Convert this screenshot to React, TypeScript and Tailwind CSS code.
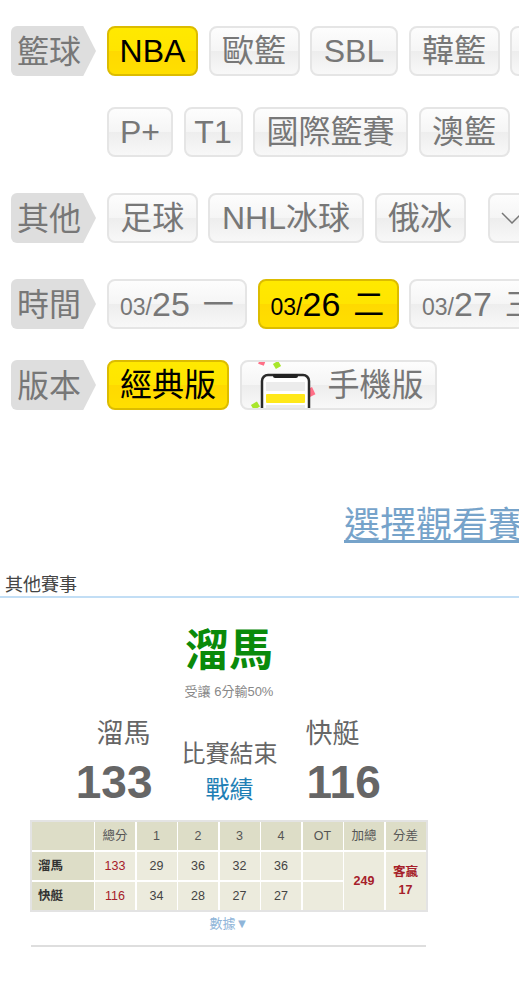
import React, { FC, ReactNode } from "react";

const greyBtn =
  "border-2 border-[#e5e5e5] text-[#777] bg-[linear-gradient(180deg,#fdfdfd_0%,#f5f5f5_50%,#ededed_50%,#f8f8f8_100%)]";
const yellowBtn =
  "border-2 border-[#dcbc00] text-black bg-[linear-gradient(180deg,#ffe900_0%,#ffe500_50%,#ffd900_50%,#ffdf00_100%)]";

const Tab: FC<{ width: string; active?: boolean; children: ReactNode }> = ({ width, active, children }) => (
  <div
    className={`h-[50px] shrink-0 rounded-[8px] flex items-center justify-center text-[32px] leading-none whitespace-nowrap ${width} ${
      active ? yellowBtn : greyBtn
    }`}
  >
    {children}
  </div>
);

const Row: FC<{ label?: string; className?: string; children: ReactNode }> = ({ label, className, children }) => (
  <div className={`flex items-center ml-[11px] ${className}`}>
    {label ? (
      <div className="w-[85px] h-[50px] shrink-0 flex items-center pl-[6px] pt-[1px] text-[32px] leading-none text-[#777] bg-[#dedede] rounded-l-[6px] [clip-path:polygon(0_0,85%_0,100%_50%,85%_100%,0_100%)]">
        {label}
      </div>
    ) : (
      <div className="w-[85px] h-[50px] shrink-0" />
    )}
    <div className="flex gap-[10.5px] ml-[11px]">{children}</div>
  </div>
);

const DateTab: FC<{ width: string; day: string; week: string; active?: boolean }> = ({ width, day, week, active }) => (
  <Tab width={width} active={active}>
    <div className="flex items-center w-full pl-[11px]">
      <span className="text-[23px] mt-[6px]">03/</span>
      <span className="text-[34px]">{day}</span>
      <span className="text-[31px] ml-[13px]">{week}</span>
    </div>
  </Tab>
);

const PhoneIcon = () => (
  <svg className="absolute left-0 top-0" width="78" height="46" viewBox="0 0 78 46" fill="none">
    <rect x="17" y="-2" width="6" height="5" fill="#ff6f87" transform="rotate(20 20 0)" />
    <rect x="32" y="0" width="6" height="6" fill="#a8e62c" transform="rotate(-30 35 3)" />
    <rect x="66" y="26" width="6" height="8" fill="#ff6f87" transform="rotate(-25 69 30)" />
    <rect x="10" y="41" width="7" height="6" fill="#a8e62c" transform="rotate(-30 13 44)" />
    <rect x="20" y="13" width="47" height="46" rx="6" fill="#fff" stroke="#2b2b2b" strokeWidth="2.5" />
    <rect x="31" y="12" width="25" height="4" rx="2" fill="#222" />
    <rect x="24" y="20" width="39" height="9" fill="#ececec" />
    <rect x="24" y="32" width="39" height="9" rx="1" fill="#ffe81a" />
    <rect x="24" y="43" width="39" height="5" fill="#ececec" />
  </svg>
);

const Cell: FC<{ className?: string; children?: ReactNode }> = ({ className, children }) => (
  <div className={`flex flex-col items-center justify-center text-[12.5px] leading-[18px] ${className}`}>{children}</div>
);

const head = "bg-[#ddddc7] text-[#555]";
const body = "bg-[#ecebdd] text-[#444]";
const red = "text-[#a6202a] font-medium";
const strong = "text-[#a6202a] font-bold";

const ScoreTable = () => (
  <div className="ml-[30px] w-[398px] grid grid-cols-[61.5px_repeat(8,40px)] grid-rows-[repeat(3,28.3px)] gap-[1.5px] bg-white border-2 border-[#e3e3e3]">
    <Cell className={head} />
    {["總分", "1", "2", "3", "4", "OT", "加總", "分差"].map((t) => (
      <Cell key={t} className={head}>
        {t}
      </Cell>
    ))}
    <Cell className={`${head} !items-start pl-[6px] !text-[#333] font-bold`}>溜馬</Cell>
    <Cell className={`${body} ${red}`}>133</Cell>
    {["29", "36", "32", "36"].map((t, i) => (
      <Cell key={i} className={body}>
        {t}
      </Cell>
    ))}
    <Cell className={body} />
    <Cell className={`${body} row-span-2 ${strong}`}>249</Cell>
    <Cell className={`${body} row-span-2 ${strong}`}>
      <span>客贏</span>
      <span>17</span>
    </Cell>
    <Cell className={`${head} !items-start pl-[6px] !text-[#333] font-bold`}>快艇</Cell>
    <Cell className={`${body} ${red}`}>116</Cell>
    {["34", "28", "27", "27"].map((t, i) => (
      <Cell key={i} className={body}>
        {t}
      </Cell>
    ))}
    <Cell className={body} />
  </div>
);

export default function App() {
  return (
    <div className="w-[519px] h-[1000px] overflow-hidden bg-white pt-[26px] font-['Liberation_Sans','Noto_Sans_CJK_TC',sans-serif]">
      <Row label="籃球">
        <Tab width="w-[91px]" active>NBA</Tab>
        <Tab width="w-[91px]">歐籃</Tab>
        <Tab width="w-[88px]">SBL</Tab>
        <Tab width="w-[91px]">韓籃</Tab>
        <Tab width="w-[91px]">日籃</Tab>
      </Row>
      <Row className="mt-[31px]">
        <Tab width="w-[66px]">P+</Tab>
        <Tab width="w-[59px]">T1</Tab>
        <Tab width="w-[155px]">國際籃賽</Tab>
        <Tab width="w-[91px]">澳籃</Tab>
      </Row>
      <Row label="其他" className="mt-[36px]">
        <Tab width="w-[90.5px]">足球</Tab>
        <Tab width="w-[156px]">NHL冰球</Tab>
        <Tab width="w-[91px]">俄冰</Tab>
        <Tab width="w-[60px] ml-[12px] !justify-start pl-[11px]">
          <svg width="22" height="12" viewBox="0 0 22 12" fill="none" stroke="#777" strokeWidth="1.5">
            <path d="M1 1 L11 11 L21 1" />
          </svg>
        </Tab>
      </Row>
      <Row label="時間" className="mt-[36px]">
        <DateTab width="w-[140px]" day="25" week="一" />
        <DateTab width="w-[141px]" day="26" week="二" active />
        <DateTab width="w-[140px]" day="27" week="三" />
      </Row>
      <Row label="版本" className="mt-[31px]">
        <Tab width="w-[122px]" active>經典版</Tab>
        <Tab width="w-[197px] relative overflow-hidden !justify-end pr-[11px]">
          <PhoneIcon />
          手機版
        </Tab>
      </Row>

      <div className="mt-[94px] ml-[344px] w-[300px] text-[36px] leading-[44px] text-[#76a3ca] underline underline-offset-[2px] whitespace-nowrap">
        選擇觀看賽事
      </div>

      <div className="mt-[25px] h-[25px] pl-[5px] text-[18px] leading-[24px] text-[#444] border-b-2 border-[#c2def5]">
        其他賽事
      </div>

      <div className="mt-[26px] ml-[30px] w-[398px] text-center text-[44px] leading-[54px] font-bold text-[#0a8a0a]">
        溜馬
      </div>
      <div className="mt-[6px] ml-[30px] w-[398px] text-center text-[13px] leading-[16px] text-[#888]">
        受讓 6分輸50%
      </div>

      <div className="mt-[16px] ml-[30px] w-[398px] flex justify-center text-[#666]">
        <div className="w-[111px] flex flex-col items-end">
          <div className="text-[27px] leading-[36px] mr-[2px]">溜馬</div>
          <div className="text-[46px] leading-[52px] font-bold mt-[4px]">133</div>
        </div>
        <div className="w-[154px] flex flex-col items-center pt-[22px]">
          <div className="text-[24px] leading-[32px]">比賽結束</div>
          <div className="text-[24px] leading-[32px] mt-[4px] text-[#1f7fb5]">戰績</div>
        </div>
        <div className="w-[110px] flex flex-col items-start">
          <div className="text-[27px] leading-[36px] -ml-[1px]">快艇</div>
          <div className="text-[46px] leading-[52px] font-bold mt-[4px]">116</div>
        </div>
      </div>

      <div className="mt-[12px]">
        <ScoreTable />
      </div>

      <div className="mt-[3px] ml-[30px] w-[398px] text-center text-[13px] leading-[18px] text-[#8fb5d9]">數據▼</div>

      <div className="mt-[12px] ml-[31px] w-[395px] h-[2px] bg-[#dedede]" />
    </div>
  );
}
